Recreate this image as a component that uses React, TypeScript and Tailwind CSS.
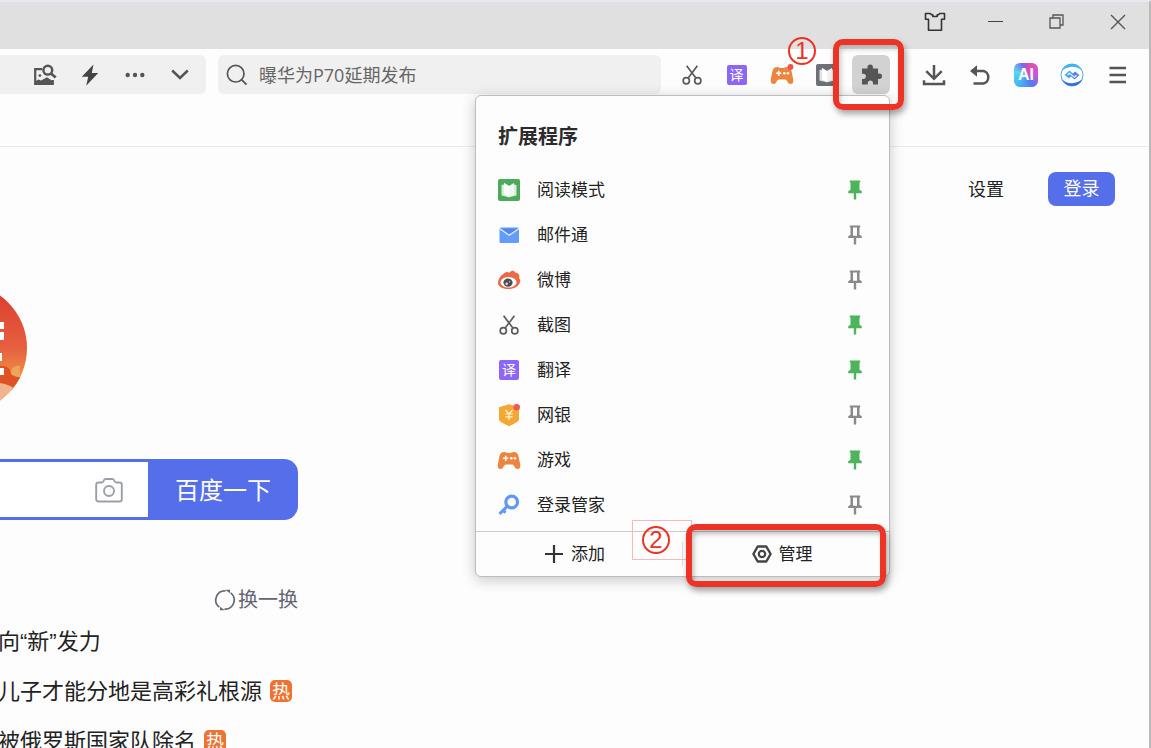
import React from "react";

type IconProps = { className?: string };

function ShirtIcon() {
  return (
    <svg width="22" height="20" viewBox="0 0 22 20" fill="none" stroke="#333" strokeWidth="1.6" strokeLinejoin="round" aria-hidden="true">
      <path d="M1.500 1.500h4.800l1.200 1.300h1.300V4.500h4.400V2.800h1.300l1.200-1.300h4.800v5.700h-3v11h-13v-11h-3z" />
    </svg>
  );
}

function RestoreIcon() {
  return (
    <svg width="15" height="15" viewBox="0 0 15 15" fill="none" stroke="#555" strokeWidth="1.300" aria-hidden="true">
      <path d="M1 4h10v10H1zM4 4V1h10v10h-3" />
    </svg>
  );
}

function CloseIcon() {
  return (
    <svg width="16" height="16" viewBox="0 0 16 16" stroke="#555" strokeWidth="1.400" aria-hidden="true">
      <path d="M1 1l14 14M15 1L1 15" />
    </svg>
  );
}

function PictureSearchIcon() {
  return (
    <svg width="24" height="22" viewBox="0 0 24 22" fill="none" aria-hidden="true">
      <path d="M9 5.200H2.200v14.600h17.600V16" stroke="#555" strokeWidth="2.200" />
      <path d="M2 20.800v-3.300l3.500-1.900 2.500 1 6-3.400 6 4v3.600z" fill="#555" />
      <circle cx="6.900" cy="11.600" r="1.400" fill="#555" />
      <circle cx="14.800" cy="6.200" r="4.400" stroke="#555" strokeWidth="2.500" />
      <path d="M18 9.500l4.700 4" stroke="#555" strokeWidth="2.700" />
    </svg>
  );
}

function BoltIcon() {
  return (
    <svg width="18" height="22" viewBox="0 0 18 22" fill="#444" aria-hidden="true">
      <path d="M12.500.5L.8 12.700h6.400L5.200 21.700 17.200 9h-6.400z" />
    </svg>
  );
}

function DotsIcon() {
  return (
    <svg width="20" height="6" viewBox="0 0 20 6" fill="#555" aria-hidden="true">
      <circle cx="2.700" cy="3" r="2.200" />
      <circle cx="10" cy="3" r="2.200" />
      <circle cx="17.300" cy="3" r="2.200" />
    </svg>
  );
}

function ChevronIcon() {
  return (
    <svg width="18" height="12" viewBox="0 0 18 12" fill="none" stroke="#555" strokeWidth="2.500" aria-hidden="true">
      <path d="M1.200 1.500L9 9l7.800-7.500" />
    </svg>
  );
}

function SearchIcon() {
  return (
    <svg width="22" height="22" viewBox="0 0 22 22" fill="none" stroke="#555" strokeWidth="1.700" aria-hidden="true">
      <circle cx="9.700" cy="9.700" r="8.300" />
      <path d="M15.500 15.700l5 5" />
    </svg>
  );
}

function ScissorsIcon() {
  return (
    <svg width="22" height="22" viewBox="0 0 22 22" fill="none" stroke="#5c5c5c" strokeWidth="1.700" aria-hidden="true">
      <circle cx="5.300" cy="16.800" r="3.100" />
      <circle cx="16.800" cy="16.800" r="3.100" />
      <path d="M5.600 1.800l9.500 12.500M16.400 1.800L7 14.300" />
    </svg>
  );
}

function TranslateIcon() {
  return (
    <span className="flex size-5 items-center justify-center rounded-xs bg-[#8b66f8] text-sm leading-none text-white">译</span>
  );
}

function GamepadIcon({ badge = false }: { badge?: boolean }) {
  return (
    <svg width="24" height="22" viewBox="0 0 24 22" aria-hidden="true">
      <path
        d="M7.300 3C4.500 3 3.200 4.200 2.500 7L.8 15.500C.4 18.600 1.500 20 3.500 20c1.500 0 2.300-.8 3-2.200.8-1.700 1.700-2.300 3-2.300h5c1.300 0 2.200.6 3 2.300.7 1.400 1.500 2.200 3 2.200 2 0 3.100-1.400 2.700-4.500L21.500 7c-.7-2.800-2-4-4.800-4-1.700 0-2 1-3.200 1h-3C9.300 4 9 3 7.300 3z"
        fill="#ee843e"
      />
      <path d="M8.700 6.700v5.200M6.100 9.300h5.200" stroke="#fff" strokeWidth="1.600" />
      <circle cx="14.300" cy="9.300" r="1.300" fill="#fff" />
      <circle cx="17.900" cy="9.300" r="1.300" fill="#fff" />
      {badge && <circle cx="20.500" cy="3" r="2.900" fill="#ee5250" />}
    </svg>
  );
}

function BookIcon({ className = "" }: IconProps) {
  return (
    <svg width="22" height="22" viewBox="0 0 22 22" className={className} aria-hidden="true">
      <rect width="22" height="22" rx="2" fill="currentColor" />
      <path d="M3.500 6l2.500-.5V4l5 3 5-3v1.500l2.500.5v10.500L11 18.300l-7.500-1.800z" fill="#fff" opacity=".8" />
      <path d="M6 4l5 3v11l-5-2.500z" fill="#fff" />
      <path d="M16 4l-5 3v11l5-2.500z" fill="#fff" opacity=".6" />
    </svg>
  );
}

function PuzzleIcon() {
  return (
    <svg width="24" height="24" viewBox="0 0 24 24" fill="#555" aria-hidden="true">
      <path d="M3 5.500h5.500V4.200a2.700 2.700 0 0 1 5.400 0v1.300H19v5h1.300a2.700 2.700 0 0 1 0 5.400H19v5.600h-5v-1.300a2.600 2.600 0 0 0-5.200 0v1.300H3v-5.600h1.300a2.600 2.600 0 0 0 0-5.200H3z" />
    </svg>
  );
}

function DownloadIcon() {
  return (
    <svg width="24" height="22" viewBox="0 0 24 22" fill="none" stroke="#555" strokeWidth="2.500" aria-hidden="true">
      <path d="M12 1v13M4.300 7.200L12 14.800l7.700-7.600M2 16.200v3.900h20v-3.900" />
    </svg>
  );
}

function UndoIcon() {
  return (
    <svg width="22" height="20" viewBox="0 0 22 20" aria-hidden="true">
      <path d="M6 6h8.200a5.800 6.300 0 0 1 0 12.500H4.500" fill="none" stroke="#555" strokeWidth="2.500" />
      <path d="M8 .3v11.400L1 6z" fill="#555" />
    </svg>
  );
}

function AiIcon() {
  return (
    <span className="flex size-6 items-center justify-center rounded-md bg-[conic-gradient(from_20deg,#e54ea8,#c558dd_20%,#5478ee_35%,#45b6f5_55%,#56d8ee_75%,#7c65f0_90%,#e54ea8)] font-['Liberation_Sans',sans-serif] text-base leading-none font-bold text-white">
      AI
    </span>
  );
}

function SwirlIcon() {
  return (
    <svg width="24" height="24" viewBox="0 0 24 24" fill="none" aria-hidden="true">
      <circle cx="12" cy="12" r="11" stroke="#58a8f3" strokeWidth="1" />
      <path d="M1.500 8C3.500 3 8 .700 13 1.100c4 .3 7.500 2.900 9.300 6.900-4-4-8-4.800-12.300-4C6.200 4.700 3.500 6 1.500 8z" fill="#36b6ef" />
      <path d="M22.500 16c-2 5-6.500 7.300-11.500 6.900-4-.3-7.500-2.900-9.300-6.900 4 4 8 4.800 12.300 4 3.800-.7 6.500-2 8.500-4z" fill="#306de6" />
      <path d="M4.500 12l5-4.500 4 3.500-4.500 4.500z" fill="#4aa5f2" />
      <path d="M19.500 12l-5 4.500-4-3.500L15 8.500z" fill="#4a86f2" />
      <path d="M7.500 12l2-1.800 5 4 2-2.200" stroke="#e4f1ff" strokeWidth="1.200" />
    </svg>
  );
}

function MenuIcon() {
  return (
    <svg width="18" height="18" viewBox="0 0 18 18" stroke="#555" strokeWidth="2.600" aria-hidden="true">
      <path d="M0.500 2h16.500M.5 9h16.500M.5 16h16.500" />
    </svg>
  );
}

function MailIcon() {
  return (
    <svg width="22" height="22" viewBox="0 0 22 22" aria-hidden="true">
      <rect x="1.500" y="3.500" width="19.500" height="15.500" rx="1.500" fill="#659bfa" />
      <path d="M1.500 4.500l9.700 6.800L21 4.500" fill="#4d88f5" stroke="#e8f0ff" strokeWidth="1.300" />
    </svg>
  );
}

function WeiboIcon() {
  return (
    <svg width="24" height="22" viewBox="0 0 24 22" aria-hidden="true">
      <path d="M1 13.500C1 9 6 4.500 9 3.300c1.500-.6 2.600-.2 2.900.9 1-2.200 5-3.800 6.400-.7 3.600.2 5 3.400 3.600 6 1.400.4 1.700 1.700 1.200 3.500C22 17.500 16.500 20 11.500 20 5 20 1 17.500 1 13.500z" fill="#eb6947" />
      <ellipse cx="11.500" cy="13.300" rx="8" ry="5.200" fill="#fff" />
      <ellipse cx="11" cy="13.600" rx="4.600" ry="4.100" fill="#4a4c53" />
      <circle cx="9.700" cy="14.800" r="1.300" fill="#ddd" />
      <circle cx="12.600" cy="12.700" r=".8" fill="#bbb" />
    </svg>
  );
}

function BankIcon() {
  return (
    <svg width="22" height="24" viewBox="0 0 22 24" aria-hidden="true">
      <path d="M11 1.200l10 3v12.300c0 2-6 5-10 6.700-4-1.700-10-4.700-10-6.700V4.200z" fill="#f3a734" />
      <path d="M7.500 7l3.500 4L14.500 7M7.200 11h7.600M7.500 13.800h7M11 11v6" stroke="#fff3d4" strokeWidth="1.200" fill="none" />
      <circle cx="18.700" cy="4.300" r="3.300" fill="#ee5a5a" />
    </svg>
  );
}

function KeyIcon() {
  return (
    <svg width="22" height="22" viewBox="0 0 22 22" fill="none" stroke="#6297f7" aria-hidden="true">
      <circle cx="13.700" cy="8" r="5.900" strokeWidth="3.200" />
      <path d="M9.500 12.200l-8 7.600M4.500 15.500l3 3.300" strokeWidth="3" />
    </svg>
  );
}

function PinIcon({ pinned }: { pinned: boolean }) {
  return pinned ? (
    <svg width="14" height="20" viewBox="0 0 14 20" fill="#4db45c" aria-hidden="true">
      <path d="M1.800.5h10.400v2h-.7v7.300l2.300 1.500v1.900H8.200v6.300H5.800v-6.300H.2v-1.900l2.300-1.500V2.500h-.7z" />
    </svg>
  ) : (
    <svg width="14" height="20" viewBox="0 0 14 20" fill="#8a8a8a" fillRule="evenodd" aria-hidden="true">
      <path d="M1.800.5h10.400v2h-.7v7.300l2.300 1.500v1.700H8.200v6.500H5.800V13H.2v-1.700l2.300-1.500V2.500h-.7zM5 2.500v8.300h4V2.500z" />
    </svg>
  );
}

function HexIcon() {
  return (
    <svg width="20" height="18" viewBox="0 0 20 18" fill="none" stroke="#444" strokeWidth="2.400" aria-hidden="true">
      <path d="M5.700 1.500h8.600L18.600 9l-4.300 7.500H5.700L1.400 9z" strokeLinejoin="round" />
      <circle cx="10" cy="9" r="3.200" strokeWidth="2.200" />
    </svg>
  );
}

function CameraIcon() {
  return (
    <svg width="28" height="26" viewBox="0 0 28 26" fill="none" stroke="#9b9fab" strokeWidth="1.900" strokeLinejoin="round" aria-hidden="true">
      <path d="M3.500 5.500h3.200c1 0 1.500-.4 1.900-1.500C9 2.500 9.600 2 10.600 2h6.800c1 0 1.600.5 2 2 .4 1.100.9 1.500 1.900 1.500h3.200c1.600 0 2.300.8 2.300 2.300v14.400c0 1.500-.7 2.300-2.300 2.300h-21c-1.600 0-2.300-.8-2.300-2.300V7.800c0-1.500.7-2.300 2.300-2.300z" />
      <circle cx="14" cy="14" r="5" />
    </svg>
  );
}

function RefreshIcon() {
  return (
    <svg width="22" height="22" viewBox="0 0 22 22" fill="none" stroke="#686b76" strokeWidth="1.700" aria-hidden="true">
      <path d="M5.400 18.200A9.100 9.100 0 0 1 11.500 1.900M16.600 3.800A9.100 9.100 0 0 1 10.500 20.100" />
      <path d="M11 .8h5v3.400zM11 21.200H6v-3.400z" fill="#686b76" stroke="none" />
    </svg>
  );
}

function FestivalBadge() {
  return (
    <svg width="28" height="130" viewBox="0 0 28 130" aria-hidden="true">
      <defs>
        <linearGradient id="dusk" x1="0" y1="0" x2="0" y2="1">
          <stop offset="0.100" stopColor="#dd4030" />
          <stop offset="0.500" stopColor="#e66040" />
          <stop offset="0.700" stopColor="#ee8c42" />
        </linearGradient>
        <clipPath id="disc">
          <circle cx="-37.500" cy="65" r="64.500" />
        </clipPath>
      </defs>
      <g clipPath="url(#disc)">
        <rect width="28" height="130" fill="url(#dusk)" />
        <path d="M10 93c0-6 4-11 10-10v14z" fill="#efa45e" />
        <path d="M0 83c7-1 11 3 11 8 5 4 10 3 17 4v20L0 102z" fill="#df5226" />
        <path d="M0 100c7 1 11 3 18 8l-18 20z" fill="#f2b48c" />
      </g>
      <path d="M0 39h4v7H0zM0 49h4v8H0zM0 70h2v8H0zM0 85h4v7H0z" fill="#fff" />
    </svg>
  );
}

const extensions = [
  { name: "阅读模式", icon: <BookIcon className="text-[#4bab5b]" />, pinned: true },
  { name: "邮件通", icon: <MailIcon />, pinned: false },
  { name: "微博", icon: <WeiboIcon />, pinned: false },
  { name: "截图", icon: <ScissorsIcon />, pinned: true },
  { name: "翻译", icon: <TranslateIcon />, pinned: true },
  { name: "网银", icon: <BankIcon />, pinned: false },
  { name: "游戏", icon: <GamepadIcon />, pinned: true },
  { name: "登录管家", icon: <KeyIcon />, pinned: false },
];

const news = [
  { text: "向“新”发力", hot: false },
  { text: "儿子才能分地是高彩礼根源", hot: true },
  { text: "被俄罗斯国家队除名", hot: true },
];

function ToolButton({ label, className, children }: { label: string; className: string; children: React.ReactNode }) {
  return (
    <button type="button" aria-label={label} className={`flex h-full shrink-0 items-center justify-center ${className}`}>
      {children}
    </button>
  );
}

function StepNumber({ value }: { value: number }) {
  return (
    <span className="flex size-7 items-center justify-center rounded-full border-2 border-[#ec3325] font-['Liberation_Sans',sans-serif] text-2xl leading-none text-[#ec3325]">
      {value}
    </span>
  );
}

function ExtensionsMenu() {
  return (
    <section
      aria-label="扩展程序"
      className="absolute top-full right-0 z-10 mt-px w-[415px] rounded-md border border-[#bdbdbd] bg-[#fdfdfd] text-[17px] text-[#222] shadow-[0_3px_14px_rgba(0,0,0,0.22)]"
    >
      <h2 className="px-[22px] pt-[25px] pb-3.5 text-[20px] leading-8 font-bold text-[#2b2b2b]">扩展程序</h2>
      <ul className="pb-1">
        {extensions.map((item) => (
          <li key={item.name} className="flex h-[45px] items-center pr-[27px] pl-[22px]">
            <span className="flex w-[22px] shrink-0 justify-center">
              <span className="shrink-0">{item.icon}</span>
            </span>
            <span className="ml-[17px] flex-1">{item.name}</span>
            <button type="button" aria-label={item.name} aria-pressed={item.pinned}>
              <PinIcon pinned={item.pinned} />
            </button>
          </li>
        ))}
      </ul>
      <footer className="flex h-[45px] items-center border-t border-[#ccc]">
        <div className="relative flex h-full flex-1 items-center justify-center">
          <button type="button" className="flex items-center gap-2 pr-2">
            <svg width="18" height="18" viewBox="0 0 18 18" stroke="#333" strokeWidth="2.200" aria-hidden="true">
              <path d="M9 0v18M0 9h18" />
            </svg>
            添加
          </button>
          <div className="absolute -top-3 -right-2.5 flex h-10 w-[60px] items-center border border-[#f6b9b3] pl-[9px]">
            <StepNumber value={2} />
          </div>
        </div>
        <span className="h-6 w-px bg-[#ddd]" />
        <div className="relative flex h-full flex-1 items-center justify-center">
          <button type="button" className="flex items-center gap-[7px] pr-2">
            <HexIcon />
            管理
          </button>
          <div className="pointer-events-none absolute -top-2 right-[3px] -bottom-[11px] left-[3px] rounded-[10px] border-[6px] border-[#ec3325] shadow-[2px_4px_6px_rgba(0,0,0,0.35),inset_2px_4px_5px_rgba(0,0,0,0.25)]" />
        </div>
      </footer>
    </section>
  );
}

export default function App() {
  return (
    <div className="flex h-screen flex-col overflow-hidden border-t-2 border-r-2 border-t-[#e9e9f1] border-r-[#b9b9b9] bg-[#fdfdfd] font-['Open_Sans','Noto_Sans_CJK_SC',sans-serif] text-[#222]">
      <header className="flex h-[47px] shrink-0 justify-end bg-[#e0e0e0] pr-px pb-2">
        <ToolButton label="皮肤" className="w-[61px]"><ShirtIcon /></ToolButton>
        <ToolButton label="最小化" className="w-[61px]"><span className="h-px w-[15px] bg-[#444]" /></ToolButton>
        <ToolButton label="还原" className="w-[61px]"><RestoreIcon /></ToolButton>
        <ToolButton label="关闭" className="w-[61px]"><CloseIcon /></ToolButton>
      </header>

      <div className="h-[98px] shrink-0 border-b border-[#ebebeb] pt-1.5">
        <nav className="flex h-[39px] pr-2">
          <div className="flex w-[206px] shrink-0 justify-end rounded-r-md bg-[#f0f0f0] pr-1">
            <ToolButton label="识图" className="w-[45px]"><PictureSearchIcon /></ToolButton>
            <ToolButton label="加速" className="w-[45px]"><BoltIcon /></ToolButton>
            <ToolButton label="更多" className="w-[45px]"><DotsIcon /></ToolButton>
            <ToolButton label="展开" className="w-[45px]"><ChevronIcon /></ToolButton>
          </div>
          <label className="ml-3 flex flex-1 items-center gap-[11px] rounded-md bg-[#f0f0f0] pl-2">
            <SearchIcon />
            <input
              type="text"
              aria-label="搜索"
              placeholder="曝华为P70延期发布"
              className="min-w-0 flex-1 bg-transparent text-lg leading-6 outline-none placeholder:text-[#666]"
            />
          </label>
          <div className="ml-2 flex shrink-0">
            <ToolButton label="截图" className="w-[45px]"><ScissorsIcon /></ToolButton>
            <ToolButton label="翻译" className="w-[45px]"><TranslateIcon /></ToolButton>
            <ToolButton label="游戏" className="w-[45px]"><GamepadIcon badge /></ToolButton>
            <ToolButton label="阅读模式" className="w-[45px]"><BookIcon className="text-[#6d7078]" /></ToolButton>
            <div className="relative mx-[3px] w-[38px]">
              <ToolButton label="扩展程序" className="w-full rounded-md bg-[#d2d2d2]"><PuzzleIcon /></ToolButton>
              <ExtensionsMenu />
              <div className="absolute -top-[18px] -left-16 z-20">
                <StepNumber value={1} />
              </div>
              <div className="pointer-events-none absolute -top-4 -right-3.5 -bottom-4 -left-[19px] z-20 rounded-[10px] border-[6px] border-[#ec3325] shadow-[2px_4px_6px_rgba(0,0,0,0.35),inset_2px_4px_5px_rgba(0,0,0,0.2)]" />
            </div>
          </div>
          <div className="ml-[18px] flex shrink-0">
            <ToolButton label="下载" className="w-[46px]"><DownloadIcon /></ToolButton>
            <ToolButton label="撤销" className="w-[46px]"><UndoIcon /></ToolButton>
            <ToolButton label="智能助手" className="w-[46px]"><AiIcon /></ToolButton>
            <ToolButton label="浏览助手" className="w-[46px]"><SwirlIcon /></ToolButton>
            <ToolButton label="菜单" className="w-[46px]"><MenuIcon /></ToolButton>
          </div>
        </nav>
      </div>

      <main className="flex items-start justify-between pr-[34px]">
        <div className="w-[298px] shrink-0 pt-[136px]">
          <FestivalBadge />
          <form className="mt-[46px] flex h-[61px]" onSubmit={(event) => event.preventDefault()}>
            <div className="flex min-w-0 flex-1 items-center border-y-[3px] border-[#556eea] bg-white pr-[25px]">
              <input type="text" aria-label="百度搜索" className="min-w-0 flex-1 bg-transparent outline-none" />
              <button type="button" aria-label="图片搜索" className="shrink-0"><CameraIcon /></button>
            </div>
            <button type="submit" className="w-[150px] shrink-0 rounded-r-[14px] bg-[#556eea] text-2xl text-white">百度一下</button>
          </form>
          <div className="mt-16 flex justify-end">
            <button type="button" className="flex items-center gap-0.5 text-[20px] leading-8 text-[#626675]">
              <RefreshIcon />
              换一换
            </button>
          </div>
          <ul>
            {news.map((item) => (
              <li key={item.text} className="-ml-0.5 flex h-[50px] items-center whitespace-nowrap">
                <a href="#" className="font-['Liberation_Sans','Noto_Sans_CJK_SC',sans-serif] text-[22px]">{item.text}</a>
                {item.hot && (
                  <span className="ml-2 flex size-[22px] items-center justify-center rounded-[5px] bg-[#ee7230] text-lg leading-none text-white">
                    热
                  </span>
                )}
              </li>
            ))}
          </ul>
        </div>
        <nav className="flex items-center gap-11 pt-[25px] text-lg">
          <a href="#">设置</a>
          <button type="button" className="h-[34px] w-[67px] rounded-lg bg-[#556eea] pb-0.5 leading-none text-white">登录</button>
        </nav>
      </main>
    </div>
  );
}
